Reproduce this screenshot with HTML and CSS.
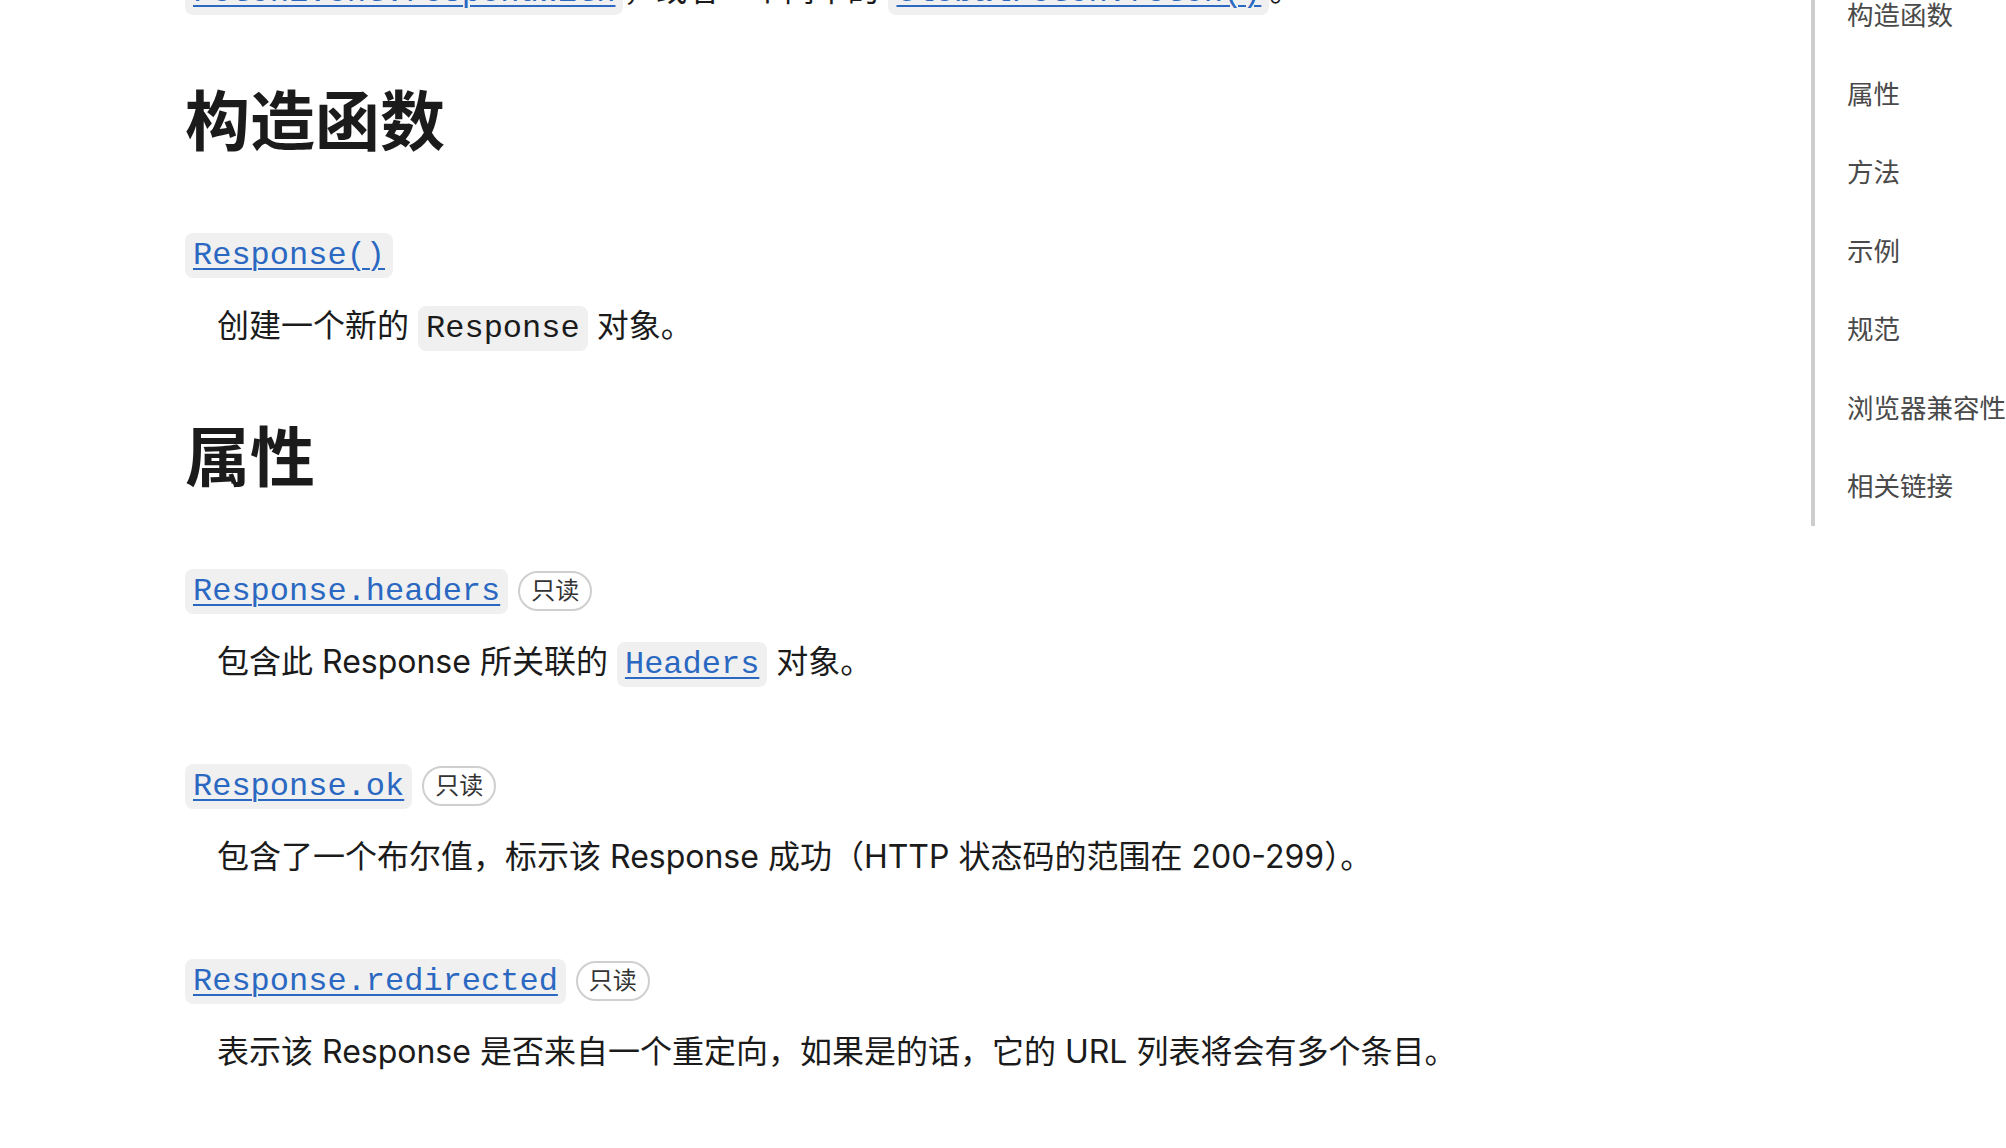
FILE: index.html
```html
<!DOCTYPE html>
<html lang="zh-CN">
<head>
    <meta charset="UTF-8">
    <meta name="viewport" content="width=device-width, initial-scale=1.0">
    <title>Response - Web API</title>
    <link rel="stylesheet" href="styles.css">
</head>
<body>
    <div class="page">
        <main class="content">
            <p class="intro">
                <a href="#"><code>FetchEvent.respondWith</code></a>，或者一个简单的 <a href="#"><code>GlobalFetch.fetch()</code></a>。
            </p>

            <h2 id="constructor">构造函数</h2>
            <dl class="props">
                <dt><a href="#"><code>Response()</code></a></dt>
                <dd>创建一个新的 <code>Response</code> 对象。</dd>
            </dl>

            <h2 id="properties">属性</h2>
            <dl class="props">
                <dt>
                    <a href="#"><code>Response.headers</code></a>
                    <span class="badge">只读</span>
                </dt>
                <dd>包含此 Response 所关联的 <a href="#"><code>Headers</code></a> 对象。</dd>

                <dt>
                    <a href="#"><code>Response.ok</code></a>
                    <span class="badge">只读</span>
                </dt>
                <dd>包含了一个布尔值，标示该 Response 成功（HTTP 状态码的范围在 200-299）。</dd>

                <dt>
                    <a href="#"><code>Response.redirected</code></a>
                    <span class="badge">只读</span>
                </dt>
                <dd>表示该 Response 是否来自一个重定向，如果是的话，它的 URL 列表将会有多个条目。</dd>
            </dl>
        </main>

        <nav class="toc">
            <ul>
                <li><a href="#constructor">构造函数</a></li>
                <li><a href="#properties">属性</a></li>
                <li><a href="#">方法</a></li>
                <li><a href="#">示例</a></li>
                <li><a href="#">规范</a></li>
                <li><a href="#">浏览器兼容性</a></li>
                <li><a href="#">相关链接</a></li>
            </ul>
        </nav>
    </div>
</body>
</html>
```

FILE: styles.css
```css
* {
    margin: 0;
    padding: 0;
    box-sizing: border-box;
}
html, body {
    overflow: hidden;
}
body {
    font-family: "Inter", "Noto Sans CJK SC", sans-serif;
    font-size: 32px;
    line-height: 48px;
    color: #1b1b1b;
    background: #fff;
}

/* page is scrolled a little, so the first line is cut at the top */
.page {
    display: flex;
    align-items: flex-start;
    margin-top: -34px;
}
.content {
    flex: 1;
    padding-left: 185px;
}

a {
    color: #2a68c2;
    text-decoration: underline;
    text-decoration-thickness: 2px;
    text-underline-offset: 4px;
}
code {
    font-family: "Liberation Mono", monospace;
    font-size: 32px;
    line-height: 20px;
    background: #f0f0f0;
    padding: 4px 8px;
    border-radius: 8px;
}

h2 {
    font-size: 65px;
    line-height: 76px;
    font-weight: 700;
    margin: 70px 0 69px;
}

.props dt {
    display: flex;
    align-items: center;
    gap: 10px;
    height: 48px;
}
.props dd {
    margin: 25px 0 0 32px;
}
.props dd + dt {
    margin-top: 74px;
}

.badge {
    display: inline-flex;
    align-items: center;
    height: 40px;
    margin-top: 4px;
    padding: 0 11px;
    border: 2px solid #cfcfcf;
    border-radius: 20px;
    font-size: 24px;
    line-height: 1;
    color: #333;
}

.toc {
    flex: 0 0 194px;
    margin-top: 10px;
    border-left: 4px solid #cdcdcd;
    white-space: nowrap;
}
.toc ul {
    list-style: none;
}
.toc li {
    padding: 21px 0 21.5px 32px;
    font-size: 26.5px;
    line-height: 36px;
}
.toc a {
    color: #4a4a4a;
    text-decoration: none;
}
```
